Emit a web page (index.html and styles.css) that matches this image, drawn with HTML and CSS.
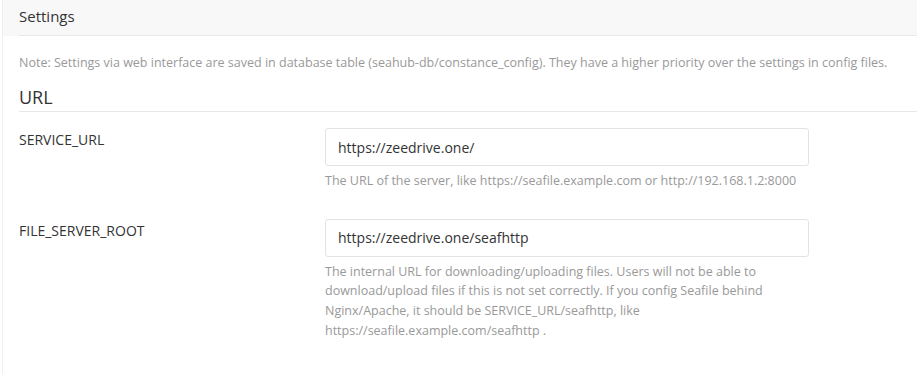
FILE: index.html
```html
<!DOCTYPE html>
<html lang="en">
<head>
    <meta charset="UTF-8">
    <title>Settings</title>
    <link rel="stylesheet" href="styles.css">
</head>
<body>
    <div class="main-panel">
        <div class="panel-head">
            <h3 class="panel-title">Settings</h3>
        </div>
        <div class="panel-body">
            <p class="note">Note: Settings via web interface are saved in database table (seahub-db/constance_config). They have a higher priority over the settings in config files.</p>

            <h4 class="section-title">URL</h4>

            <div class="setting-row">
                <div class="setting-label">SERVICE_URL</div>
                <div class="setting-field">
                    <input class="text-input" type="text" value="https://zeedrive.one/">
                    <p class="help">The URL of the server, like https://seafile.example.com or http://192.168.1.2:8000</p>
                </div>
            </div>

            <div class="setting-row">
                <div class="setting-label">FILE_SERVER_ROOT</div>
                <div class="setting-field">
                    <input class="text-input" type="text" value="https://zeedrive.one/seafhttp">
                    <p class="help">The internal URL for downloading/uploading files. Users will not be able to download/upload files if this is not set correctly. If you config Seafile behind Nginx/Apache, it should be SERVICE_URL/seafhttp, like https://seafile.example.com/seafhttp .</p>
                </div>
            </div>
        </div>
    </div>
</body>
</html>
```

FILE: styles.css
```css
:root {
    --text-color: #333333;
    --muted-color: #999999;
    --line-color: #e8e8e8;
    --head-bg: #f8f8f8;
    --input-border: #e3e3e3;
}

body {
    margin: 0;
    font-family: "Open Sans", "Noto Sans", Arial, sans-serif;
    color: var(--text-color);
    background: #ffffff;
    overflow: hidden;
}

.main-panel {
    margin-left: 2px;
    border-left: 1px solid #efefef;
    min-height: 374px;
}

.panel-head {
    background: var(--head-bg);
    padding: 0 0 0 16px;
}

.panel-title {
    margin: 0;
    height: 35px;
    line-height: 33px;
    font-size: 15px;
    font-weight: normal;
    border-bottom: 1px solid var(--line-color);
}

.panel-body {
    padding: 0 0 0 16px;
}

.note {
    margin: 15px 0 0;
    font-size: 12.5px;
    line-height: 24px;
    color: var(--muted-color);
}

.section-title {
    margin: 8px 0 0;
    font-size: 18px;
    font-weight: normal;
    line-height: 28px;
    padding-bottom: 0;
    border-bottom: 1px solid var(--line-color);
}

.setting-row {
    display: flex;
    margin-top: 16px;
}

.setting-row + .setting-row {
    margin-top: 28px;
}

.setting-label {
    width: 306px;
    font-size: 14px;
    line-height: 24px;
}

.setting-field {
    width: 484px;
}

.text-input {
    display: block;
    box-sizing: border-box;
    width: 100%;
    height: 38px;
    padding: 0 12px;
    border: 1px solid var(--input-border);
    border-radius: 3px;
    font-family: inherit;
    font-size: 14px;
    color: var(--text-color);
    outline: none;
}

.help {
    margin: 5px 0 0;
    font-size: 12.5px;
    line-height: 19.7px;
    color: var(--muted-color);
}
```
